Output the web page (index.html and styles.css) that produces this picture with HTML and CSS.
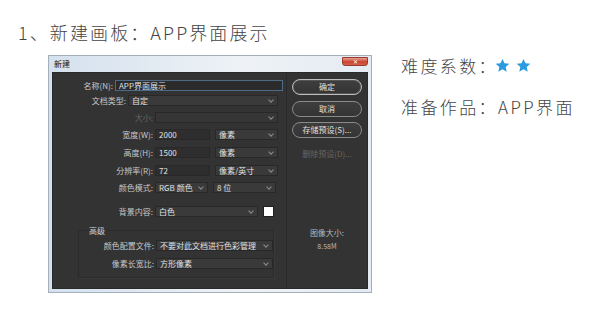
FILE: index.html
```html
<html>
<head>
    <title>新建画板</title>
    <link rel="stylesheet" href="styles.css">
</head>
<body>
<div class="heading">1、新建画板：APP界面展示</div>

<div class="main">
    <div class="win">
        <div class="titlebar">
            <span class="wintitle">新建</span>
            <span class="close">&#x2715;</span>
        </div>
        <div class="client">
            <div class="form">
                <div class="row r1">
                    <label class="lab w1">名称(N):</label>
                    <div class="field focus wide1">APP界面展示</div>
                </div>
                <div class="row r2">
                    <label class="lab w2">文档类型:</label>
                    <div class="field sel wide2"><span>自定</span><span class="chev"></span></div>
                </div>
                <div class="row r3">
                    <label class="lab w3 off">大小:</label>
                    <div class="field sel wide3 dis"><span></span><span class="chev"></span></div>
                </div>
                <div class="row r4">
                    <label class="lab w3">宽度(W):</label>
                    <div class="field num">2000</div>
                    <div class="field sel unit"><span>像素</span><span class="chev"></span></div>
                </div>
                <div class="row r5">
                    <label class="lab w3">高度(H):</label>
                    <div class="field num">1500</div>
                    <div class="field sel unit"><span>像素</span><span class="chev"></span></div>
                </div>
                <div class="row r6">
                    <label class="lab w3">分辨率(R):</label>
                    <div class="field num">72</div>
                    <div class="field sel unit"><span>像素/英寸</span><span class="chev"></span></div>
                </div>
                <div class="row r7">
                    <label class="lab w3">颜色模式:</label>
                    <div class="field sel mode"><span>RGB 颜色</span><span class="chev"></span></div>
                    <div class="field sel unit"><span>8 位</span><span class="chev"></span></div>
                </div>
                <div class="row r8">
                    <label class="lab w3">背景内容:</label>
                    <div class="field sel bg"><span>白色</span><span class="chev"></span></div>
                    <div class="swatch"></div>
                </div>

                <fieldset class="group">
                    <legend>高级</legend>
                    <div class="row r9">
                        <label class="lab w4">颜色配置文件:</label>
                        <div class="field sel adv"><span>不要对此文档进行色彩管理</span><span class="chev"></span></div>
                    </div>
                    <div class="row r10">
                        <label class="lab w4">像素长宽比:</label>
                        <div class="field sel adv"><span>方形像素</span><span class="chev"></span></div>
                    </div>
                </fieldset>
            </div>

            <div class="side">
                <div class="btn default">确定</div>
                <div class="btn">取消</div>
                <div class="btn">存储预设(S)...</div>
                <div class="btntext">删除预设(D)...</div>
                <div class="sizelab">图像大小:</div>
                <div class="sizeval">8.58M</div>
            </div>
        </div>
    </div>

    <div class="info">
        <div class="line first">难度系数：
            <svg class="star" viewBox="0 0 24 24"><path d="M12 1.5l3.2 7 7.6.8-5.7 5.1 1.6 7.5L12 18l-6.7 3.9 1.6-7.5L1.2 9.3l7.6-.8z"/></svg>
            <svg class="star" viewBox="0 0 24 24"><path d="M12 1.5l3.2 7 7.6.8-5.7 5.1 1.6 7.5L12 18l-6.7 3.9 1.6-7.5L1.2 9.3l7.6-.8z"/></svg>
        </div>
        <div class="line second">准备作品：APP界面</div>
    </div>
</div>
</body>
</html>
```

FILE: styles.css
```css
/* page */
body {
    margin: 0;
    background: #fff;
    font-family: "Noto Sans CJK SC", "Noto Sans", sans-serif;
    color: #444;
}

.heading {
    padding: 20px 0 0 18px;
    height: 24px;
    font-size: 18px;
    font-weight: 300;
    line-height: 24px;
    letter-spacing: 2.1px;
}

.main {
    display: flex;
    align-items: flex-start;
    margin-top: 11px;
}

/* dialog window */
.win {
    margin-left: 48px;
    width: 324px;
    height: 238px;
    box-sizing: border-box;
    border: 1px solid #a3afbb;
    padding: 0 3px 3px 3px;
    background: linear-gradient(to right, #d4e1ee, #eef2f6 60%, #e4ebf2);
}

.titlebar {
    height: 16px;
    display: flex;
    justify-content: space-between;
    align-items: flex-start;
}
.wintitle {
    font-size: 8px;
    line-height: 15px;
    padding-left: 2px;
    color: #111;
}
.close {
    margin-top: 1px;
    width: 26px;
    height: 9px;
    border-radius: 0 0 3px 3px;
    background: linear-gradient(#e8a296, #c9432f 55%, #d3604d);
    border: 1px solid #9a3a2c;
    box-sizing: border-box;
    color: #fff;
    font-size: 6px;
    line-height: 7px;
    text-align: center;
}

.client {
    height: 217px;
    display: flex;
    background: #333;
    border: 1px solid #2a2a2a;
    box-sizing: border-box;
    font-size: 8px;
    line-height: 11px;
    color: #c8c8c8;
}

.form {
    width: 233px;
    padding-top: 7px;
}

.row {
    display: flex;
    align-items: center;
    height: 11px;
}
.r2 { margin-top: 4px; }
.r3 { margin-top: 6px; }
.r4 { margin-top: 6px; }
.r5 { margin-top: 7px; }
.r6 { margin-top: 7px; }
.r7 { margin-top: 6px; }
.r8 { margin-top: 13px; }
.r9 { margin-top: 4px; }
.r10 { margin-top: 7px; }

.lab {
    text-align: right;
    padding-right: 2px;
    white-space: nowrap;
    box-sizing: border-box;
}
.w1 { width: 62px; }
.w2 { width: 75px; }
.w3 { width: 102px; }
.w4 { width: 77px; }
.off { color: #666; }

.field {
    height: 11px;
    box-sizing: border-box;
    background: #3a3a3a;
    border: 1px solid #282828;
    color: #e0e0e0;
    padding-left: 3px;
    line-height: 9px;
    white-space: nowrap;
    overflow: hidden;
}
.focus {
    width: 168px;
    background: #2b2b2b;
    border-color: #4d6a86;
}
.sel {
    display: flex;
    justify-content: space-between;
    align-items: center;
    padding-right: 4px;
}
.chev {
    width: 3px;
    height: 3px;
    border-right: 1px solid #8e8e8e;
    border-bottom: 1px solid #8e8e8e;
    transform: rotate(45deg);
    margin-top: -2px;
}
.wide2 { width: 150px; }
.wide3 { width: 123px; }
.dis { background: #363636; }
.num { width: 55px; background: #2e2e2e; }
.unit { width: 63px; margin-left: 5px; }
.mode { width: 53px; }
.bg { width: 103px; }
.adv { width: 117px; }

.swatch {
    width: 9px;
    height: 9px;
    margin-left: 5px;
    background: #fff;
    border: 1px solid #1f1f1f;
}

.group {
    margin: 8px 12px 0 25px;
    padding: 0 0 8px 0;
    border: 1px solid #2b2b2b;
    box-shadow: 1px 1px 0 #393939;
}
.group legend {
    margin-left: 9px;
    padding: 0 1px;
    font-size: 8px;
    line-height: 11px;
    color: #d0d0d0;
}

/* right column */
.side {
    flex: 1;
    border-left: 1px solid #2a2a2a;
    display: flex;
    flex-direction: column;
    align-items: center;
    padding-top: 6px;
}
.btn {
    width: 70px;
    height: 16px;
    box-sizing: border-box;
    border: 1px solid #8a8a8a;
    border-radius: 8px;
    background: linear-gradient(#3e3e3e, #343434);
    text-align: center;
    line-height: 14px;
    color: #e0e0e0;
    margin-bottom: 5px;
}
.default {
    border-color: #bdbdbd;
    box-shadow: inset 0 0 0 1px #555;
    margin-bottom: 6px;
}
.btntext {
    margin-top: 5px;
    color: #666;
}
.sizelab {
    margin-top: 68px;
    color: #b8b8b8;
}
.sizeval {
    margin-top: 3px;
    font-size: 7px;
    color: #b8b8b8;
}

/* right info */
.info {
    margin-left: 29px;
    font-size: 17px;
    font-weight: 300;
    letter-spacing: 2.4px;
    color: #444;
}
.line {
    display: flex;
    align-items: center;
    height: 22px;
}
.first { margin-top: -1px; }
.second { margin-top: 19px; }
.star {
    width: 15px;
    height: 15px;
    fill: #2b9be0;
    margin-left: -3px;
}
.star + .star { margin-left: 6px; }
```
